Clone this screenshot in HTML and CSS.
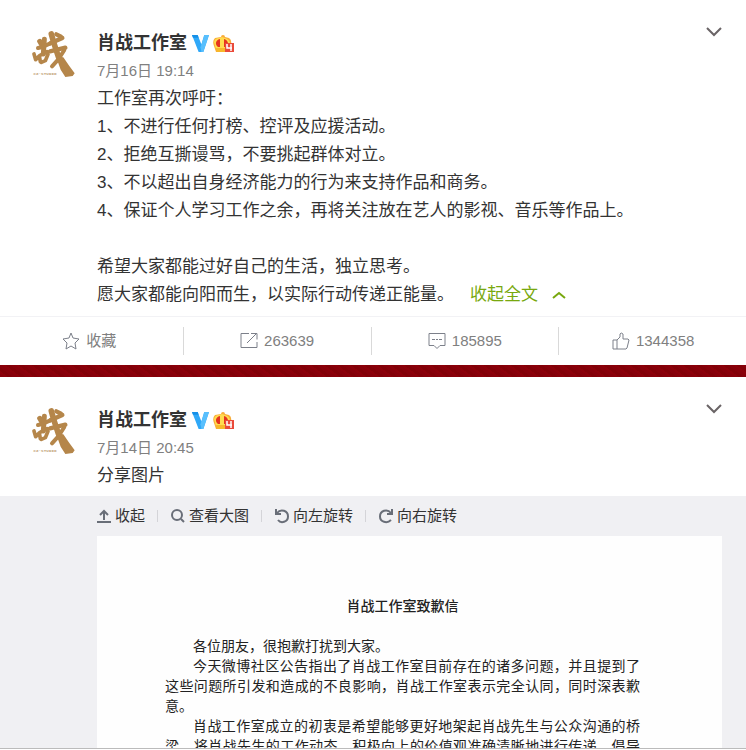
FILE: index.html
```html
<!DOCTYPE html>
<html lang="zh-CN">
<head>
<meta charset="utf-8">
<title>肖战工作室</title>
<link rel="stylesheet" href="styles.css">
</head>
<body>
<svg class="defs" aria-hidden="true">
  <symbol id="logo" viewBox="0 0 150 150">
    <g fill="none" stroke="#b5864a" stroke-linecap="round" stroke-linejoin="round">
      <path stroke-width="15" d="M29 34l7 12M43 28l-3 44"/>
      <path stroke-width="12" d="M24 54l10-2 32-14"/>
      <path stroke-width="11" d="M12 72l5 17 12-12 22-12 3 8-8 19-12 5M28 78l3 17"/>
      <path stroke-width="17" d="M64 12l6 22 15 46 20 32"/>
      <path stroke-width="13" d="M61 40l36-16M79 13l14 7M60 64l46-11"/>
      <path stroke-width="12" d="M103 60l-18 28-19 21"/>
    </g>
    <path fill="#b5864a" d="M78 80l22 2 18 26 16 22-6 8-22 3-14-22z"/>
    <text x="10" y="135" font-size="13" font-weight="700" fill="#c3a47a" font-family="Liberation Mono, monospace">XZ·STUDIO</text>
  </symbol>
  <symbol id="vip" viewBox="0 0 18 18">
    <path fill="#2fa8f8" d="M0 0h6l4 10 3-10h5l-6 18H7z"/><path fill="#1590e8" d="M0 0h6l1 3H1z"/><path fill="#58bffd" d="M13 0h5l-6 18h-2l-1-5z"/>
  </symbol>
  <symbol id="crown" viewBox="0 0 21 19">
    <path fill="#f9ac38" d="M8 3a2 2 0 1 1 4 0l4 1q3 2 2 6l-2 8H3L1 12Q-1 7 2 4z"/>
    <path fill="#ffdc50" d="M1 8q1-4 5-4l3-1 3 1q4 1 5 5l-1 6H3z"/>
    <path fill="#e5331f" d="M7 5v8H5C2 11 2 6 7 5zm4 0c4 1 5 5 3 8h-3z"/>
    <path fill="#f8b82a" d="M3 14h12v4H4z"/>
    <path fill="#ea4a3a" d="M12 9h9v9h-9z"/>
    <path fill="none" stroke="#fff" stroke-width="1.500" d="M14 10v4h5M18 10v7"/>
  </symbol>
  <symbol id="down" viewBox="0 0 16 10"><path fill="none" stroke="currentColor" stroke-width="2" d="M1 1l7 7 7-7"/></symbol>
</svg>
<main class="feed">
  <article class="card">
    <div class="post">
      <a class="avatar" href="#" aria-label="肖战工作室"><svg><use href="#logo"/></svg></a>
      <div class="content">
        <header class="head">
          <a class="name" href="#">肖战工作室</a>
          <svg class="vip"><use href="#vip"/></svg>
          <svg class="crown"><use href="#crown"/></svg>
          <button class="more" aria-label="更多"><svg><use href="#down"/></svg></button>
        </header>
        <a class="date" href="#">7月16日 19:14</a>
        <p class="text">工作室再次呼吁：<br>1、不进行任何打榜、控评及应援活动。<br>2、拒绝互撕谩骂，不要挑起群体对立。<br>3、不以超出自身经济能力的行为来支持作品和商务。<br>4、保证个人学习工作之余，再将关注放在艺人的影视、音乐等作品上。<br><br>希望大家都能过好自己的生活，独立思考。<br>愿大家都能向阳而生，以实际行动传递正能量。<a class="fold" href="#">收起全文<svg viewBox="0 0 14 8"><path fill="none" stroke="currentColor" stroke-width="2" d="M1 7l6-5 6 5"/></svg></a></p>
      </div>
    </div>
    <div class="actions">
      <button><svg viewBox="0 0 18 18"><path d="M9 1l2 5 6 1-4 4 1 6-5-3-5 3 1-6-4-4 6-1z"/></svg>收藏</button>
      <button><svg viewBox="0 0 18 18"><path d="M9 1.500H1v14h16V10M7 11l9-9M11 1.500h6v6"/></svg>263639</button>
      <button><svg viewBox="0 0 18 18"><path d="M1 1.500h16v12h-5l-3 3-3-3H1z"/><path d="M4 7.500h3M8 7.500h2M11 7.500h3"/></svg>185895</button>
      <button><svg viewBox="0 0 18 18"><path d="M1 8h4v9H1zM5 8l3-3V2q1-2 3 0v5h5l1 1-2 8-1 1H5"/></svg>1344358</button>
    </div>
  </article>
  <article class="card media-card">
    <div class="post">
      <a class="avatar" href="#" aria-label="肖战工作室"><svg><use href="#logo"/></svg></a>
      <div class="content">
        <header class="head">
          <a class="name" href="#">肖战工作室</a>
          <svg class="vip"><use href="#vip"/></svg>
          <svg class="crown"><use href="#crown"/></svg>
          <button class="more" aria-label="更多"><svg><use href="#down"/></svg></button>
        </header>
        <a class="date" href="#">7月14日 20:45</a>
        <p class="text">分享图片</p>
      </div>
    </div>
    <section class="media">
      <div class="tools">
        <button><svg viewBox="0 0 14 14"><path d="M0 13h14M7 11V2M3 6l4-4 4 4"/></svg>收起</button>
        <button><svg viewBox="0 0 14 14"><circle cx="6" cy="6" r="5"/><path d="M10 10l3 3"/></svg>查看大图</button>
        <button><svg viewBox="0 0 14 14"><path d="M1 0v5h5M2 4C6-1 13 2 13 7.500 13 13 6 15 3 11"/></svg>向左旋转</button>
        <button><svg viewBox="0 0 14 14"><path d="M13 0v5H8M12 4C8-1 1 2 1 7.500 1 13 8 15 12 11"/></svg>向右旋转</button>
      </div>
      <div class="paper">
        <h2>肖战工作室致歉信</h2>
        <p>各位朋友，很抱歉打扰到大家。</p>
        <p>今天微博社区公告指出了肖战工作室目前存在的诸多问题，并且提到了这些问题所引发和造成的不良影响，肖战工作室表示完全认同，同时深表歉意。</p>
        <p class="full">肖战工作室成立的初衷是希望能够更好地架起肖战先生与公众沟通的桥梁，将肖战先生的工作动态、积极向上的价值观准确清晰地进行传递，倡导</p>
      </div>
    </section>
  </article>
</main>
</body>
</html>
```
FILE: styles.css
```css
* { box-sizing: border-box; }
body {
  margin: 0;
  background: #fff;
  color: #333;
  font-family: "Liberation Sans", "Noto Sans CJK SC", sans-serif;
}
a { color: inherit; text-decoration: none; }
button {
  padding: 0;
  border: 0;
  background: none;
  color: inherit;
  font: inherit;
}
svg { display: block; flex: none; }
.defs { display: none; }
.feed {
  display: flex;
  flex-direction: column;
  gap: 12px;
  height: calc(100vh - 1px);
  overflow: hidden;
  border-bottom: 1px solid #bbb;
  background: repeating-linear-gradient(37deg, #87000a 0 3px, #8c0009 3px 5px, #820007 5px 8px);
}
.card { background: #fff; }
.media-card {
  display: flex;
  flex: 1;
  flex-direction: column;
  min-height: 0;
}
.post {
  display: flex;
  gap: 17px;
  padding: 29px 24px 7px 30px;
}
.media-card .post { padding-bottom: 6px; }
.avatar { padding-top: 1px; }
.avatar svg { width: 50px; height: 50px; }
.content { flex: 1; min-width: 0; }
.head {
  display: flex;
  align-items: center;
  height: 28px;
}
.name { font-size: 18px; font-weight: 700; line-height: 28px; }
.vip { width: 17px; height: 17px; margin: 0 4px 0 5px; }
.crown { width: 21px; height: 19px; }
.more { margin-left: auto; padding-bottom: 22px; color: #6a6466; }
.more svg { width: 16px; height: 10px; }
.date { display: block; color: #808080; font-size: 15px; line-height: 28px; }
.text { margin: 0; font-size: 17px; line-height: 28px; }
.fold {
  display: inline-flex;
  align-items: center;
  gap: 14px;
  margin-left: 16px;
  color: #78a80e;
  vertical-align: top;
}
.fold svg { width: 14px; height: 8px; }
.actions {
  display: grid;
  grid-template-columns: repeat(4, 1fr);
  border-top: 1px solid #f2f2f5;
  padding: 10px 0;
  margin: 0 -1px 0 -4px;
}
.actions button {
  display: flex;
  align-items: center;
  justify-content: center;
  gap: 6px;
  height: 28px;
  border-right: 1px solid #d9d9d9;
  color: #808080;
  font-size: 15px;
  line-height: 28px;
}
.actions button:last-child { border-right: 0; }
.actions svg {
  width: 18px;
  height: 18px;
  fill: none;
  stroke: #7c808a;
}
.media {
  display: flex;
  flex: 1;
  flex-direction: column;
  min-height: 0;
  padding: 0 24px 0 97px;
  background: #f0f0f3;
}
.tools {
  display: flex;
  flex: none;
  align-items: center;
  height: 40px;
  font-size: 15px;
}
.tools button {
  display: flex;
  align-items: center;
  gap: 4px;
  line-height: 20px;
}
.tools button + button::before {
  width: 1px;
  height: 12px;
  margin: 0 9px 0 12px;
  background: #d4d4d8;
  content: "";
}
.tools svg {
  width: 14px;
  height: 14px;
  fill: none;
  stroke: #696e78;
  stroke-width: 2;
  overflow: visible;
}
.paper {
  flex: 1;
  min-height: 0;
  overflow: hidden;
  padding: 60px 82px 0 68px;
  background: #fefefe;
  color: #222;
  font-size: 14px;
  line-height: 20px;
}
.paper h2 {
  margin: 0 0 20px;
  font-size: 14px;
  font-weight: 500;
  text-align: center;
}
.paper p { margin: 0; text-align: justify; text-indent: 2em; }
.paper .full { text-align-last: justify; }
```
